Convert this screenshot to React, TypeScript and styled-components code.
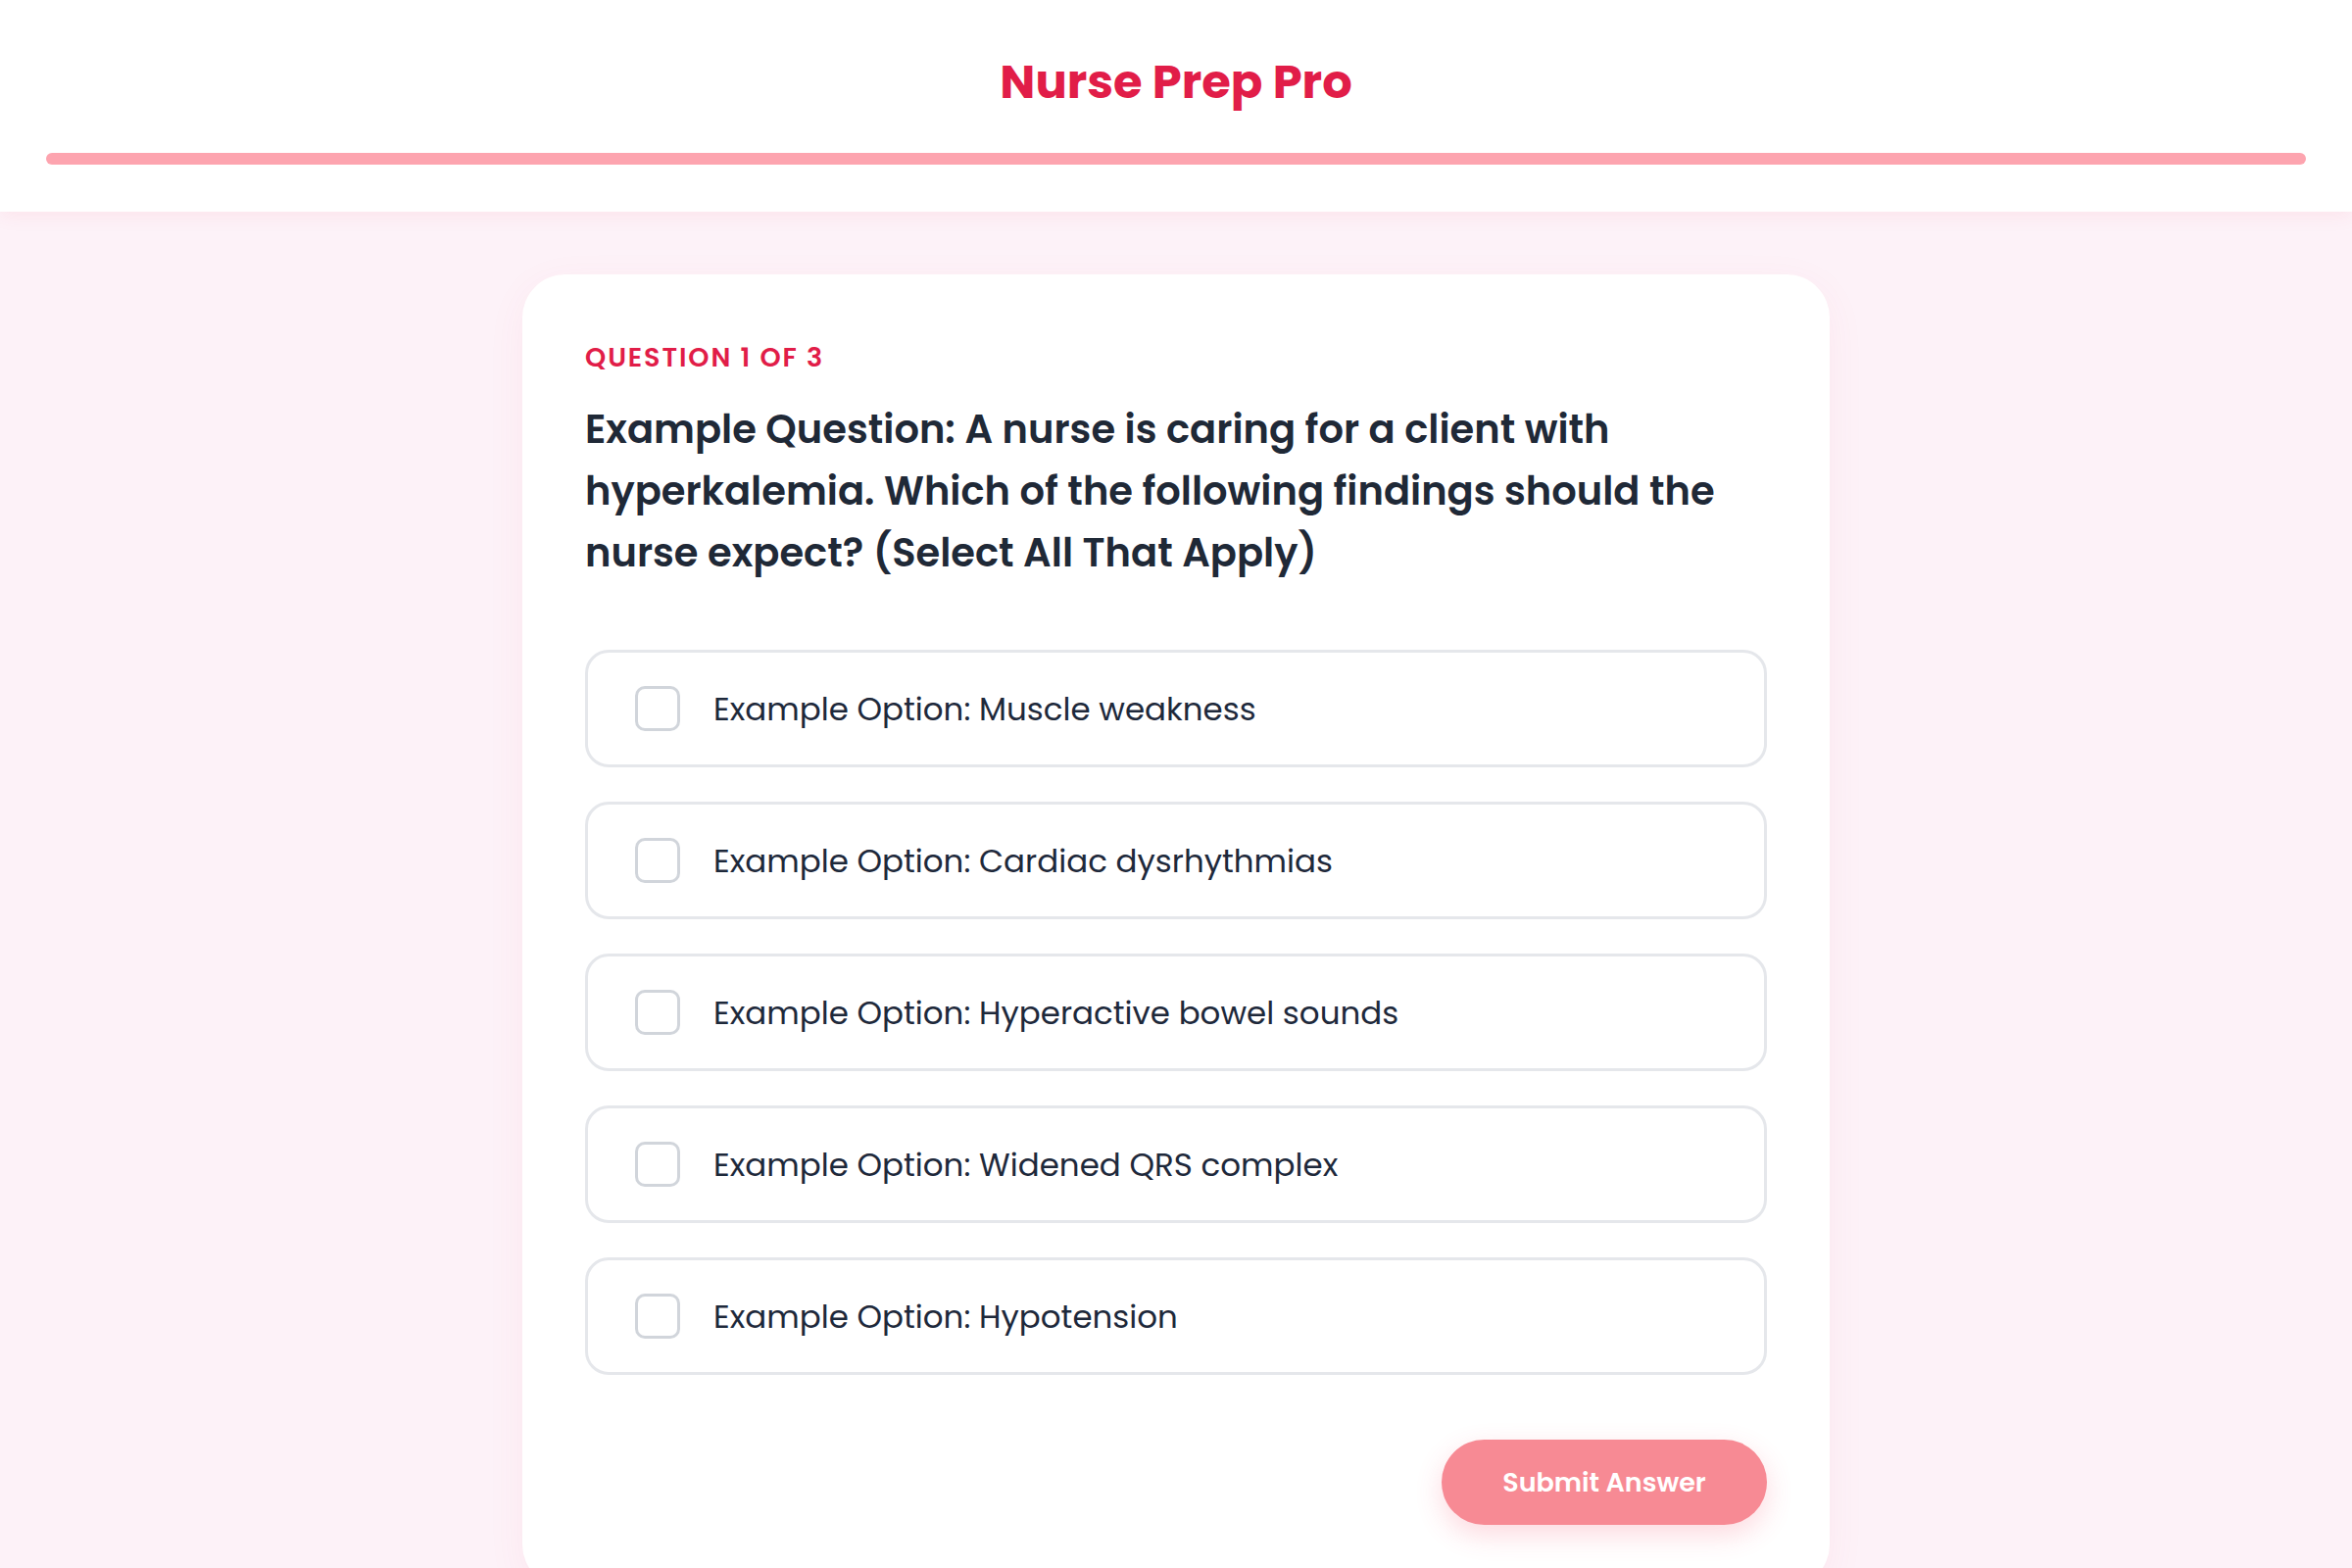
import React from "react";
import styled, { createGlobalStyle } from "styled-components";

const GlobalStyle = createGlobalStyle`
	* {
		box-sizing: border-box;
	}

	body {
		margin: 0;
		background: #fdf2f8;
		font-family: "Poppins", Inter, "DejaVu Sans", sans-serif;
		color: #1f2937;
	}
`;

const options = [
	"Example Option: Muscle weakness",
	"Example Option: Cardiac dysrhythmias",
	"Example Option: Hyperactive bowel sounds",
	"Example Option: Widened QRS complex",
	"Example Option: Hypotension",
];

const App = () => {
	const [checked, setChecked] = React.useState<boolean[]>(options.map(() => false));

	const toggle = (index: number) =>
		setChecked((prev) => prev.map((value, i) => (i === index ? !value : value)));

	return (
		<>
			<GlobalStyle />
			<Header>
				<Title>Nurse Prep Pro</Title>
				<ProgressTrack />
			</Header>

			<Main>
				<Card>
					<Counter>Question 1 of 3</Counter>
					<Question>
						Example Question: A nurse is caring for a client with hyperkalemia. Which of the
						following findings should the nurse expect? (Select All That Apply)
					</Question>

					<OptionList>
						{options.map((option, index) => (
							<Option key={option} onClick={() => toggle(index)}>
								<Checkbox $checked={checked[index]} />
								<OptionText>{option}</OptionText>
							</Option>
						))}
					</OptionList>

					<Footer>
						<SubmitButton type="button">Submit Answer</SubmitButton>
					</Footer>
				</Card>
			</Main>
		</>
	);
};

const Header = styled.header`
	background: #ffffff;
	padding: 48px 47px;
	box-shadow: 0 4px 18px rgba(244, 63, 94, 0.08);
	position: relative;
	z-index: 1;
`;

const Title = styled.h1`
	margin: 0;
	text-align: center;
	font-size: 48px;
	line-height: 72px;
	font-weight: 700;
	color: #e11d48;
`;

const ProgressTrack = styled.div`
	margin-top: 36px;
	height: 12px;
	border-radius: 999px;
	background: #fda4af;
`;

const Main = styled.main`
	padding-top: 64px;
`;

const Card = styled.section`
	width: 1334px;
	margin: 0 auto;
	background: #ffffff;
	border-radius: 44px;
	padding: 64px;
	box-shadow: 0 10px 40px rgba(244, 63, 94, 0.06);
`;

const Counter = styled.div`
	font-size: 27px;
	line-height: 42px;
	font-weight: 600;
	letter-spacing: 0.07em;
	text-transform: uppercase;
	color: #e11d48;
`;

const Question = styled.h2`
	margin: 21px 0 0;
	font-size: 40px;
	line-height: 63px;
	font-weight: 600;
	color: #1f2937;
`;

const OptionList = styled.div`
	margin-top: 67px;
	display: flex;
	flex-direction: column;
	gap: 35px;
`;

const Option = styled.label`
	height: 120px;
	display: flex;
	align-items: center;
	gap: 34px;
	padding: 0 48px;
	border: 3px solid #e5e7eb;
	border-radius: 24px;
	cursor: pointer;
`;

const Checkbox = styled.span<{ $checked: boolean }>`
	width: 46px;
	height: 46px;
	flex-shrink: 0;
	border: 3px solid ${({ $checked }) => ($checked ? "#e11d48" : "#d1d5db")};
	background: ${({ $checked }) => ($checked ? "#e11d48" : "#ffffff")};
	border-radius: 10px;
`;

const OptionText = styled.span`
	font-size: 32.5px;
	line-height: 45px;
	font-weight: 400;
	color: #1e293b;
`;

const Footer = styled.div`
	margin-top: 66px;
	display: flex;
	justify-content: flex-end;
`;

const SubmitButton = styled.button`
	width: 332px;
	height: 87px;
	border: none;
	border-radius: 999px;
	background: #f78a94;
	color: #ffffff;
	font-family: inherit;
	font-size: 27px;
	font-weight: 600;
	box-shadow: 0 10px 28px rgba(244, 63, 94, 0.2);
	cursor: pointer;
`;

export default App;
